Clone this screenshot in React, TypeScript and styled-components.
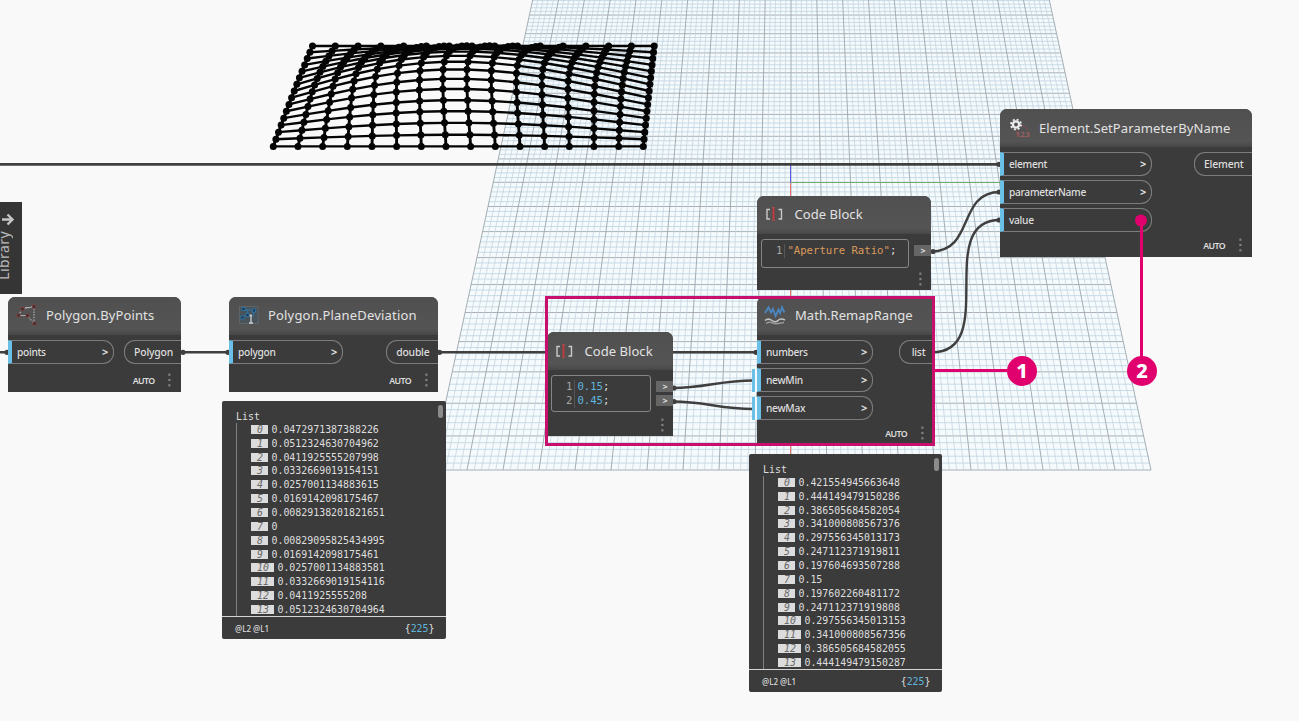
import React from 'react';
import styled, { createGlobalStyle } from 'styled-components';

const GlobalStyle = createGlobalStyle`
  html, body { margin: 0; padding: 0; overflow: hidden; }
  *, *::before, *::after { box-sizing: border-box; }
`;

const MAGENTA = '#e0006e';
const SANS = "'Noto Sans', 'Open Sans', sans-serif";
const MONO = "'DejaVu Sans Mono', 'Liberation Mono', monospace";

const Workspace = styled.main`
  position: relative;
  width: 1299px;
  height: 721px;
  overflow: hidden;
  background: #f9f9f9;
  font-family: ${SANS};
  color: #dedede;
`;

const Layer = styled.svg`
  position: absolute;
  inset: 0;
  display: block;
  pointer-events: none;
`;

const NodeCard = styled.section<{ $x: number; $y: number; $w: number; $h: number }>`
  position: absolute;
  left: ${(p) => p.$x}px;
  top: ${(p) => p.$y}px;
  width: ${(p) => p.$w}px;
  height: ${(p) => p.$h}px;
  display: flex;
  flex-direction: column;
  background: #3b3b3b;
  border-radius: 7px 7px 0 0;
`;

const NodeHeader = styled.header<{ $pad: number; $h: number; $gap?: number; $lift?: number }>`
  flex: none;
  display: flex;
  align-items: center;
  gap: ${(p) => p.$gap ?? 8}px;
  height: ${(p) => p.$h}px;
  padding: 0 0 ${(p) => p.$lift ?? 2}px ${(p) => p.$pad}px;
  background: linear-gradient(#505050, #545454 85%, #474747);
  border-radius: 7px 7px 0 0;
`;

const NodeTitle = styled.h2<{ $track?: number }>`
  margin: 0;
  font-size: 13px;
  line-height: 18px;
  font-weight: 400;
  letter-spacing: ${(p) => p.$track ?? 0.1}px;
  white-space: nowrap;
  color: #e2e2e2;
`;

const NodeBody = styled.div`
  display: flex;
  justify-content: space-between;
  align-items: flex-start;
  padding-top: 5px;
`;

const PortList = styled.div`
  display: flex;
  flex-direction: column;
  gap: 4px;
`;

const InPort = styled.div<{ $w: number }>`
  display: flex;
  align-items: center;
  justify-content: space-between;
  width: ${(p) => p.$w}px;
  height: 24px;
  padding: 0 5px 1px 5px;
  border: 1px solid #7d7d7d;
  border-left: 4px solid #6ac0e7;
  border-radius: 0 11px 11px 0;
  font-size: 10.2px;
  font-weight: 500;
  letter-spacing: -0.3px;
  line-height: 14px;
`;

const Chevron = styled.span`
  font-size: 11px;
  font-weight: 700;
  line-height: 12px;
`;

const OutPort = styled.div<{ $w: number }>`
  display: flex;
  align-items: center;
  justify-content: flex-end;
  width: ${(p) => p.$w}px;
  height: 24px;
  padding-right: 8px;
  border: 1px solid #7d7d7d;
  border-right: 0;
  border-radius: 11px 0 0 11px;
  font-size: 10.4px;
  font-weight: 500;
  letter-spacing: -0.2px;
  line-height: 14px;
`;

const NodeFooter = styled.footer<{ $h: number; $pr: number }>`
  margin-top: auto;
  display: flex;
  align-items: center;
  justify-content: flex-end;
  gap: 13.5px;
  height: ${(p) => p.$h}px;
  padding-right: ${(p) => p.$pr}px;
  font-size: 8.8px;
  font-weight: 600;
  letter-spacing: -0.6px;
  line-height: 12px;
`;

const AutoLabel = styled.span`
  padding-top: 2px;
`;

const Dots = () => (
  <svg width="3" height="14" viewBox="0 0 3 14" fill="#818181">
    <rect x="0.3" y="0.6" width="2.2" height="2.2" />
    <rect x="0.3" y="5.9" width="2.2" height="2.2" />
    <rect x="0.3" y="11.2" width="2.2" height="2.2" />
  </svg>
);

const CodeBody = styled.div`
  display: flex;
  align-items: flex-start;
  justify-content: space-between;
  padding: 5px 0 0 4px;
`;

const Editor = styled.div<{ $w: number; $h: number; $drop: number }>`
  display: flex;
  flex-direction: column;
  width: ${(p) => p.$w}px;
  height: ${(p) => p.$h}px;
  padding: ${(p) => p.$drop}px 0 0 14px;
  border: 1px solid #858585;
  border-radius: 3px;
  font-family: ${MONO};
  font-size: 10.65px;
`;

const CodeLine = styled.div`
  display: flex;
  line-height: 14px;
  white-space: pre;
`;

const LineNo = styled.span`
  padding-right: 2px;
  margin-right: 2px;
  border-right: 1px solid #565656;
  color: #a5a5a5;
`;

const Literal = styled.span<{ $color: string }>`
  color: ${(p) => p.$color};
`;

const OutTabs = styled.div`
  display: flex;
  flex-direction: column;
  gap: 3px;
  padding-top: 6.5px;
`;

const OutTab = styled.div`
  display: flex;
  align-items: center;
  justify-content: center;
  width: 17px;
  height: 11px;
  padding-left: 1px;
  background: #666;
  font-size: 9px;
  font-weight: 700;
  line-height: 9px;
`;

const Preview = styled.section<{ $x: number; $y: number; $w: number }>`
  position: absolute;
  left: ${(p) => p.$x}px;
  top: ${(p) => p.$y}px;
  width: ${(p) => p.$w}px;
  height: 238px;
  display: flex;
  flex-direction: column;
  background: #3b3b3b;
  border-radius: 2px;
  font-family: ${MONO};
  font-size: 9.92px;
`;

const PreviewTitle = styled.div`
  padding: 9px 0 0 14.5px;
  height: 21.5px;
  line-height: 13px;
`;

const PreviewItems = styled.ol`
  list-style: none;
  margin: 0 0 0 14.5px;
  padding: 0 0 0 13.5px;
  border-left: 1px solid #808080;
  height: 193.5px;
`;

const PreviewItem = styled.li`
  display: flex;
  align-items: center;
  gap: 3.5px;
  height: 13.85px;
  line-height: 13px;
`;

const IndexBadge = styled.span`
  height: 9px;
  padding: 0 5px 0 6.5px;
  background: #dcdcdc;
  color: #6a6a6a;
  font-style: italic;
  line-height: 9.5px;
`;

const PreviewFooter = styled.div`
  flex: 1;
  display: flex;
  align-items: center;
  justify-content: space-between;
  padding: 0 11.5px 0 13.5px;
  border-top: 1px solid #d5d5d5;
`;

const Levels = styled.span`
  font-family: ${SANS};
  font-size: 8px;
  font-weight: 500;
`;

const Count = styled.span`
  b { font-weight: 400; color: #5fb4dc; }
`;

const ScrollThumb = styled.div`
  position: absolute;
  top: 4px;
  right: 3px;
  width: 5px;
  height: 13px;
  border-radius: 2.5px;
  background: #8b8b8b;
`;

const LibraryTab = styled.aside`
  position: absolute;
  left: 0;
  top: 202px;
  width: 21.5px;
  height: 92px;
  background: #353535;
  overflow: hidden;
`;

const LibraryLabel = styled.span`
  position: absolute;
  left: -6px;
  top: 29px;
  writing-mode: vertical-rl;
  transform: rotate(180deg);
  font-size: 14px;
  letter-spacing: 0.4px;
  line-height: 20px;
  color: #b9b9b9;
`;

const LibraryArrow = styled.svg`
  position: absolute;
  left: 1px;
  top: 11px;
`;

const CalloutFrame = styled.div`
  position: absolute;
  left: 545px;
  top: 296px;
  width: 390px;
  height: 150px;
  border: 3px solid #c70f6d;
`;

const CalloutBadge = styled.div<{ $x: number }>`
  position: absolute;
  left: ${(p) => p.$x}px;
  top: 356px;
  width: 30px;
  height: 30px;
  display: flex;
  align-items: center;
  justify-content: center;
  border-radius: 50%;
  background: ${MAGENTA};
  color: #fff;
  font-family: 'Noto Sans', sans-serif;
  font-size: 20px;
  font-weight: 800;
  line-height: 28px;
`;

/* Ground plane: a 20 x 20 grid in perspective, five minor cells per major one. */
const CX = 791;
const HORIZON = -1194;
const planeY = (n: number) => HORIZON + 1 / (1 / 1376.3 + n * 1.2563e-5);
const planeX = (i: number, y: number) => CX + (i * 36 * (y - HORIZON)) / 1664;

function GroundPlane() {
  const columns: React.ReactElement[] = [];
  const rows: React.ReactElement[] = [];
  const top = planeY(9);
  const bottom = planeY(-10);
  for (let k = -50; k <= 50; k++) {
    const major = k % 5 === 0;
    columns.push(
      <line key={k} x1={planeX(k / 5, top)} y1={top} x2={planeX(k / 5, bottom)} y2={bottom}
        stroke={major ? '#a4aeb4' : '#c6d3dc'} strokeWidth={major ? 1 : 0.75} />,
    );
  }
  for (let k = -50; k <= 45; k++) {
    const y = planeY(k / 5);
    const major = k % 5 === 0;
    rows.push(
      <line key={k} x1={planeX(-10, y)} y1={y} x2={planeX(10, y)} y2={y}
        stroke={major ? '#a7b1b7' : '#bdd4e1'} strokeWidth={major ? 1 : 0.8} />,
    );
  }
  const corners = [[-10, top], [10, top], [10, bottom], [-10, bottom]]
    .map(([i, y]) => `${planeX(i, y)},${y}`).join(' ');
  return (
    <g>
      <polygon points={corners} fill="#f5fafd" />
      {rows}
      {columns}
      <path d="M790.5 164V182.500" stroke="#5a5af0" />
      <path d="M791 182.500H1001" stroke="#6aae6a" />
      <path d="M790.5 183V470" stroke="#f07070" />
    </g>
  );
}

/* Roof surface: 16 x 16 points lifted by a height profile. */
const LIFT = [0, 13.5, 28, 42, 54, 67, 77, 85, 88, 86, 79, 68, 54, 38, 20, 0];
const meshPoint = (i: number, j: number): [number, number] => {
  const t = j / 15;
  const left = 273.3 + 39.2 * t;
  const right = 643.3 + 10.9 * t;
  const lift = (LIFT[j] * Math.sin((Math.PI * i) / 15)) / 3;
  const y = 146.4 - 7.2 * j + 0.034 * j * j;
  return [left + ((right - left) * i) / 15 - lift * 0.53, y - lift];
};

function Mesh() {
  const idx = Array.from({ length: 16 }, (_, n) => n);
  const path = (pts: [number, number][]) => 'M' + pts.map((p) => p.map((v) => v.toFixed(2)).join(' ')).join('L');
  return (
    <g fill="none" stroke="#050505" strokeWidth="2.4" strokeLinejoin="round">
      {idx.map((j) => <path key={`r${j}`} d={path(idx.map((i) => meshPoint(i, j)))} />)}
      {idx.map((i) => <path key={`c${i}`} strokeWidth="2.9" d={path(idx.map((j) => meshPoint(i, j)))} />)}
      <g fill="#050505" stroke="none">
        {idx.flatMap((i) => idx.map((j) => {
          const [x, y] = meshPoint(i, j);
          return <circle key={`${i}-${j}`} cx={x} cy={y} r="3.5" />;
        }))}
      </g>
    </g>
  );
}

function Wires() {
  return (
    <g fill="none" stroke="#3f3f3f" strokeWidth="2.4">
      <path d="M0 164.300H1000" strokeWidth="2.8" />
      <path d="M0 352.300H8M181 352.300H229M437 352.300H757" />
      <path d="M931 251.500C975 251.500 957 192 1000 192" />
      <path d="M932 352.300C1000 352.300 933 220 1000 220" />
      <path d="M673 388C705 388 720 380.500 753 380.500" />
      <path d="M673 401.500C705 401.500 720 409 753 409" />
      <g fill="#3f3f3f" stroke="none">
        <circle cx="183" cy="352.300" r="2.600" /><circle cx="228" cy="352.300" r="2.600" />
        <circle cx="439.500" cy="352.300" r="2.600" /><circle cx="7" cy="352.300" r="2.600" />
        <circle cx="933" cy="251.500" r="2.600" /><circle cx="999" cy="192" r="2.600" />
        <circle cx="999" cy="220" r="2.600" /><circle cx="999" cy="164.300" r="2.600" />
        <circle cx="674" cy="388" r="2.600" /><circle cx="674" cy="401.500" r="2.600" />
        <circle cx="756" cy="352.300" r="2.600" />
      </g>
    </g>
  );
}

const BracketIcon = () => (
  <svg width="19" height="16" viewBox="0 0 19 16" fill="none">
    <path d="M5 3.500H2V13H5M13.500 3.500H16.500V13H13.500" stroke="#c9c9c9" strokeWidth="1.400" />
    <path d="M8.500 1.500V14.500" stroke="#c8383f" strokeWidth="1.800" />
    <path d="M7 1.500H10M7 14.500H10" stroke="#a84a4e" strokeWidth="1" />
  </svg>
);

const GearIcon = () => (
  <svg width="22" height="20" viewBox="0 0 22 20" fill="none">
    <path d="M12 7.500h3l4 4.500M8 12v7" stroke="#874b4b" strokeWidth="1" />
    <circle cx="7" cy="6.500" r="3.100" stroke="#ececec" strokeWidth="2.400" />
    <circle cx="7" cy="6.500" r="5" stroke="#ececec" strokeWidth="1.800" strokeDasharray="2 1.930" />
    <text x="7" y="19" fontSize="6.6" fontWeight="700" fontFamily={SANS} fill="#a06062" textLength="13.500">1.2.3</text>
  </svg>
);

const ByPointsIcon = () => (
  <svg width="22" height="22" viewBox="0 0 22 22" fill="none">
    <path d="M2.500 11.500L6.500 5L18 2.500V19.500L11.500 12" stroke="#a8a8a8" strokeWidth="1.300" strokeDasharray="1.500 1.200" />
    <path d="M4 11.500h6M9 3.500h6" stroke="#aaa" strokeWidth="1" />
    <g fill="#2f2828" stroke="#7a4040" strokeWidth="1">
      <rect x="5" y="3.500" width="3" height="3" /><rect x="16.500" y="1" width="3" height="3" />
      <rect x="1" y="10" width="3" height="3" /><rect x="10" y="10" width="3" height="3" />
      <rect x="17" y="18" width="3" height="3" />
    </g>
  </svg>
);

const PlaneIcon = () => (
  <svg width="20" height="20" viewBox="0 0 20 20" fill="none">
    <rect x="0.500" y="1.500" width="18.500" height="17" fill="#49535a" stroke="#626a70" strokeWidth="0.800" />
    <path d="M4 4L15 5.500L14 12M3 12L9 10L8 5" stroke="#2f739f" strokeWidth="1.100" />
    <g fill="#18324a" stroke="#2d76a8" strokeWidth="0.900">
      <rect x="3" y="2.500" width="3" height="3" /><rect x="13.500" y="4" width="3" height="3" />
      <rect x="2" y="11" width="3" height="3" /><rect x="7" y="8.500" width="3" height="3" />
    </g>
    <path d="M12 9.500V18M10 18H14M10.500 10.500H13" stroke="#cfcfcf" strokeWidth="1.300" />
  </svg>
);

const RemapIcon = () => (
  <svg width="22" height="20" viewBox="0 0 22 20" fill="none">
    <path d="M1 8L4.500 2.500L7 7.500L9 4L11.500 11L14.500 4.500L16 8L18 2.500L20.500 7.500" stroke="#4a86bd" strokeWidth="1.900" />
    <path d="M1 15.500C4 13 6 14 8 15.500S12 17.500 14 15.500S18 13.500 21 15" stroke="#c4c4c4" strokeWidth="1.500" />
    <path d="M2 18.500C5 16.500 7 17 9 18S14 19 20 17.500" stroke="#9a9a9a" strokeWidth="1.500" />
  </svg>
);

interface FunctionNodeProps {
  x: number; y: number; w: number; h: number;
  title: string; track?: number; gap?: number; lift?: number; icon: React.ReactNode; pad: number;
  inputs: string[]; inW: number; output: string; outW: number;
}

function FunctionNode(p: FunctionNodeProps) {
  return (
    <NodeCard $x={p.x} $y={p.y} $w={p.w} $h={p.h}>
      <NodeHeader $pad={p.pad} $h={38} $gap={p.gap} $lift={p.lift}>
        {p.icon}
        <NodeTitle $track={p.track}>{p.title}</NodeTitle>
      </NodeHeader>
      <NodeBody>
        <PortList>
          {p.inputs.map((name) => (
            <InPort key={name} $w={p.inW}><span>{name}</span><Chevron>&gt;</Chevron></InPort>
          ))}
        </PortList>
        <OutPort $w={p.outW}>{p.output}</OutPort>
      </NodeBody>
      <NodeFooter $h={23} $pr={10}><AutoLabel>AUTO</AutoLabel><Dots /></NodeFooter>
    </NodeCard>
  );
}

interface CodeNodeProps {
  x: number; y: number; w: number; h: number; color: string;
  lines: string[]; edW: number; edH: number; drop: number; lift: number;
}

function CodeNode(p: CodeNodeProps) {
  return (
    <NodeCard $x={p.x} $y={p.y} $w={p.w} $h={p.h}>
      <NodeHeader $pad={8} $h={37.500} $gap={10.500} $lift={p.lift}>
        <BracketIcon />
        <NodeTitle $track={0.05}>Code Block</NodeTitle>
      </NodeHeader>
      <CodeBody>
        <Editor $w={p.edW} $h={p.edH} $drop={p.drop}>
          {p.lines.map((line, n) => (
            <CodeLine key={line}>
              <LineNo>{n + 1}</LineNo><Literal $color={p.color}>{line}</Literal>;
            </CodeLine>
          ))}
        </Editor>
        <OutTabs>{p.lines.map((line) => <OutTab key={line}>&gt;</OutTab>)}</OutTabs>
      </CodeBody>
      <NodeFooter $h={23} $pr={9.500}><Dots /></NodeFooter>
    </NodeCard>
  );
}

function ListPreview({ x, y, w, values }: { x: number; y: number; w: number; values: string[] }) {
  return (
    <Preview $x={x} $y={y} $w={w}>
      <PreviewTitle>List</PreviewTitle>
      <PreviewItems>
        {values.map((value, n) => (
          <PreviewItem key={n}><IndexBadge>{n}</IndexBadge><span>{value}</span></PreviewItem>
        ))}
      </PreviewItems>
      <PreviewFooter>
        <Levels>@L2 @L1</Levels>
        <Count>{'{'}<b>225</b>{'}'}</Count>
      </PreviewFooter>
      <ScrollThumb />
    </Preview>
  );
}

const DEVIATIONS = [
  '0.0472971387388226', '0.0512324630704962', '0.0411925555207998', '0.0332669019154151',
  '0.0257001134883615', '0.0169142098175467', '0.00829138201821651', '0',
  '0.00829095825434995', '0.0169142098175461', '0.0257001134883581', '0.0332669019154116',
  '0.0411925555208', '0.0512324630704964',
];

const REMAPPED = [
  '0.421554945663648', '0.444149479150286', '0.386505684582054', '0.341000808567376',
  '0.297556345013173', '0.247112371919811', '0.197604693507288', '0.15',
  '0.197602260481172', '0.247112371919808', '0.297556345013153', '0.341000808567356',
  '0.386505684582055', '0.444149479150287',
];

const BindingBars = styled.div`
  position: absolute;
  left: 752px;
  top: 369px;
  display: grid;
  grid-template-rows: 23px 23px;
  gap: 5px;
  width: 5px;
`;

const BindingBar = styled.span`
  background: #6ac0e7;
  border-right: 2px solid #f4f9fc;
`;

export default function App() {
  return (
    <Workspace>
      <GlobalStyle />
      <Layer width="1299" height="721" viewBox="0 0 1299 721">
        <GroundPlane />
        <Mesh />
        <Wires />
      </Layer>

      <LibraryTab>
        <LibraryArrow width="13" height="13" viewBox="0 0 13 13" fill="none" stroke="#c4c4c4" strokeWidth="2.400">
          <path d="M1 6.500H11M6.500 1.500L11.500 6.500L6.500 11.500" />
        </LibraryArrow>
        <LibraryLabel>Library</LibraryLabel>
      </LibraryTab>

      <FunctionNode x={8} y={297} w={173} h={94.500} title="Polygon.ByPoints" track={0.13} icon={<ByPointsIcon />} pad={8}
        inputs={['points']} inW={106} output="Polygon" outW={57} />
      <FunctionNode x={229} y={297} w={208.500} h={94.500} title="Polygon.PlaneDeviation" track={0.18} gap={9} icon={<PlaneIcon />} pad={10}
        inputs={['polygon']} inW={114} output="double" outW={51.500} />
      <CodeNode x={757} y={196} w={174} h={94} color="#dc9a5c" lines={['"Aperture Ratio"']} edW={148} edH={29} drop={4} lift={1} />
      <CodeNode x={547} y={332} w={126} h={104} color="#5fb4dc" lines={['0.15', '0.45']} edW={100} edH={37} drop={4} lift={0} />
      <FunctionNode x={757} y={297} w={176.500} h={147} title="Math.RemapRange" track={0.05} icon={<RemapIcon />} pad={7} gap={9}
        inputs={['numbers', 'newMin', 'newMax']} inW={116} output="list" outW={34.500} />
      <BindingBars><BindingBar /><BindingBar /></BindingBars>
      <FunctionNode x={1000} y={109} w={251.500} h={147.500} title="Element.SetParameterByName" lift={0} icon={<GearIcon />} pad={9}
        inputs={['element', 'parameterName', 'value']} inW={152} output="Element" outW={58} />

      <ListPreview x={221.500} y={401} w={224.500} values={DEVIATIONS} />
      <ListPreview x={748.500} y={454} w={193.500} values={REMAPPED} />

      <CalloutFrame />
      <Layer width="1299" height="721" viewBox="0 0 1299 721" stroke={MAGENTA} strokeWidth="3">
        <path d="M934 370.500H1010M1141.500 220V360" />
        <circle cx="1141" cy="220.500" r="6" fill={MAGENTA} stroke="none" />
      </Layer>
      <CalloutBadge $x={1007}>1</CalloutBadge>
      <CalloutBadge $x={1127}>2</CalloutBadge>
    </Workspace>
  );
}
